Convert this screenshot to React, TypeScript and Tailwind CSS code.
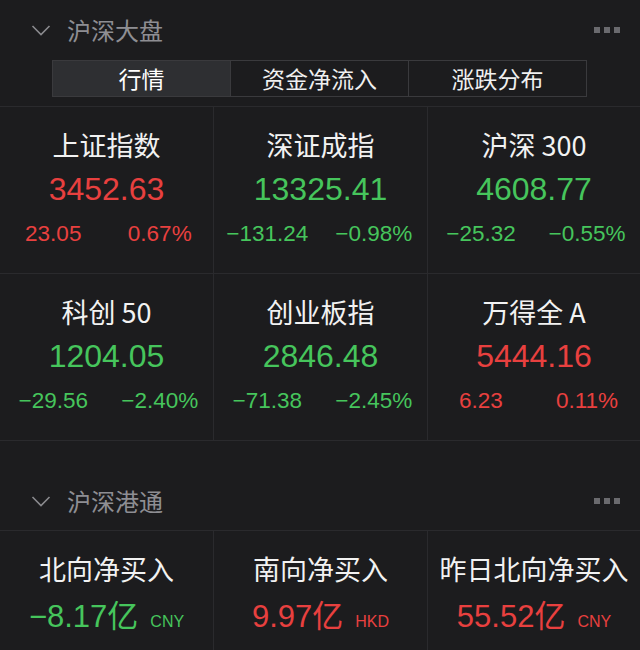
import React from "react";

const RED = "text-[#e8403f]";
const GREEN = "text-[#46c55c]";

type Idx = { name: string; value: string; chg: string; pct: string; up: boolean };

const indices: Idx[] = [
  { name: "上证指数", value: "3452.63", chg: "23.05", pct: "0.67%", up: true },
  { name: "深证成指", value: "13325.41", chg: "−131.24", pct: "−0.98%", up: false },
  { name: "沪深 300", value: "4608.77", chg: "−25.32", pct: "−0.55%", up: false },
  { name: "科创 50", value: "1204.05", chg: "−29.56", pct: "−2.40%", up: false },
  { name: "创业板指", value: "2846.48", chg: "−71.38", pct: "−2.45%", up: false },
  { name: "万得全 A", value: "5444.16", chg: "6.23", pct: "0.11%", up: true },
];

const flows = [
  { name: "北向净买入", value: "−8.17", unit: "CNY", up: false },
  { name: "南向净买入", value: "9.97", unit: "HKD", up: true },
  { name: "昨日北向净买入", value: "55.52", unit: "CNY", up: true },
];

const NUM = "font-['Liberation_Sans','Noto_Sans_CJK_SC',sans-serif]";

function Chevron() {
  return (
    <svg width="20" height="14" viewBox="0 0 20 14" fill="none">
      <path d="M1.5 3 L10 11.5 L18.5 3" stroke="#8a8a8e" strokeWidth="1.6" />
    </svg>
  );
}

function Dots() {
  return (
    <div className="flex gap-[4px]">
      <div className="w-[6px] h-[6px] bg-[#6a6a6e]" />
      <div className="w-[6px] h-[6px] bg-[#6a6a6e]" />
      <div className="w-[6px] h-[6px] bg-[#6a6a6e]" />
    </div>
  );
}

function SectionHeader({ title }: { title: string }) {
  return (
    <div className="flex items-center justify-between pl-[31px] pr-[20px]">
      <div className="flex items-center gap-[16px]">
        <Chevron />
        <span className="text-[24px] leading-[30px] text-[#8e8e93]">{title}</span>
      </div>
      <Dots />
    </div>
  );
}

export default function App() {
  return (
    <div className="w-[640px] h-[650px] overflow-hidden bg-[#1c1c1e] font-['Noto_Sans_CJK_SC','Noto_Sans',sans-serif]">
      <div className="h-[60px] flex flex-col justify-center">
        <SectionHeader title="沪深大盘" />
      </div>
      <div className="ml-[52px] w-[535px] h-[37px] border border-[#3a3a3d] flex">
        <div className="w-[178px] flex items-center justify-center bg-[#2e2f32] text-[23px] text-white border-r border-[#3a3a3d]">
          行情
        </div>
        <div className="w-[178px] flex items-center justify-center text-[23px] text-[#f0f0f0] border-r border-[#3a3a3d]">
          资金净流入
        </div>
        <div className="flex-1 flex items-center justify-center text-[23px] text-[#f0f0f0]">
          涨跌分布
        </div>
      </div>
      <div className="h-[9px]" />
      <div className="grid grid-cols-[213px_213px_212px] gap-px bg-[#2a2a2d] py-px">
        {indices.map((d) => (
          <div key={d.name} className="h-[166px] bg-[#1c1c1e] flex flex-col items-center">
            <div className="mt-[21px] h-[34px] leading-[34px] text-[27px] text-[#f2f2f2]">{d.name}</div>
            <div className={`mt-[7px] h-[40px] leading-[40px] text-[32px] ${NUM} ${d.up ? RED : GREEN}`}>
              {d.value}
            </div>
            <div className={`mt-[10px] w-full grid grid-cols-2 h-[30px] leading-[30px] text-[22.5px] ${NUM} ${d.up ? RED : GREEN}`}>
              <span className="text-center">{d.chg}</span>
              <span className="text-center">{d.pct}</span>
            </div>
          </div>
        ))}
      </div>
      <div className="h-[89px] pt-[30px] flex flex-col justify-center">
        <SectionHeader title="沪深港通" />
      </div>
      <div className="grid grid-cols-[213px_213px_212px] gap-px bg-[#2a2a2d] pt-px">
        {flows.map((f) => (
          <div key={f.name} className="h-[130px] bg-[#1c1c1e] flex flex-col items-center">
            <div className="mt-[21px] h-[34px] leading-[34px] text-[27px] text-[#f2f2f2]">{f.name}</div>
            <div className={`mt-[8px] h-[40px] flex items-baseline gap-[12px] ${f.up ? RED : GREEN}`}>
              <span className={`text-[31px] leading-[40px] ${NUM}`}>
                {f.value}
                <span className="font-['Noto_Sans_CJK_SC',sans-serif]">亿</span>
              </span>
              <span className={`text-[16px] ${NUM}`}>{f.unit}</span>
            </div>
          </div>
        ))}
      </div>
    </div>
  );
}
